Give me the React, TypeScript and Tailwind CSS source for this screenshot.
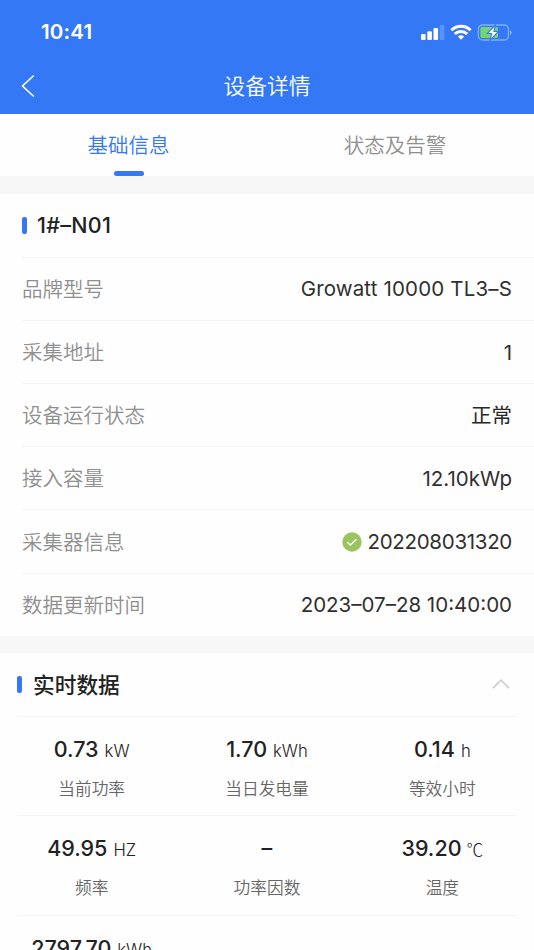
import type { ReactNode } from "react";

function StatusIcons() {
  return (
    <svg width="92" height="18" viewBox="0 0 92 18" fill="none">
      <g fill="#fff">
        <rect x="1" y="10" width="4.6" height="6" rx="1" />
        <rect x="7.3" y="7.2" width="4.6" height="8.8" rx="1" />
        <rect x="13.5" y="4" width="4.6" height="12" rx="1" />
        <rect x="19.8" y="1" width="4.6" height="15" rx="1" opacity="0.2" />
      </g>
      <g stroke="#fff" strokeWidth="3">
        <path d="M31.4 6.2a13.6 13.6 0 0 1 19.2 0" />
        <path d="M34.8 10a8.8 8.8 0 0 1 12.4 0" />
      </g>
      <path d="M37.9 12.6a4.6 4.6 0 0 1 6.2 0L41 15.8Z" fill="#fff" />
      <rect x="58.4" y="1" width="30" height="15" rx="4" stroke="#fff" strokeOpacity="0.4" strokeWidth="1.3" />
      <path d="M90 6.3c2 .9 2 3.7 0 4.7Z" fill="#fff" fillOpacity="0.5" />
      <rect x="60.4" y="3.1" width="17.6" height="10.8" rx="1.6" fill="#73d76f" />
      <path d="M75.4.8 67.2 9.5h4.4l-1.5 6.7 8.2-8.8h-4.4Z" fill="#fff" stroke="#3478f6" strokeWidth="1.1" />
    </svg>
  );
}

function Row({ label, children }: { label: string; children: ReactNode }) {
  return (
    <div className="ml-[22px] flex h-[63.2px] items-center justify-between border-t border-[#f5f5f5] pt-[2px] pr-[22px] text-[20.5px]">
      <span className="pt-px font-[350] text-[#8f8f8f]">{label}</span>
      {children}
    </div>
  );
}

function Metric({ value, unit, label }: { value: string; unit?: ReactNode; label?: string }) {
  return (
    <div className="flex flex-col items-center pt-[16px] whitespace-nowrap">
      <div className="flex h-[32px] items-baseline gap-[6px] text-[#222]">
        <span className="text-[21.5px] leading-[32px] font-medium">{value}</span>
        {unit && <span className="text-[16.7px] font-light">{unit}</span>}
      </div>
      {label && <span className="mt-[12px] text-[16.7px] leading-[25px] font-[350] text-[#666]">{label}</span>}
    </div>
  );
}

export default function App() {
  return (
    <div className="flex h-[950px] w-full flex-col overflow-hidden bg-[#f7f7f7] font-['Inter','Noto_Sans_CJK_SC',sans-serif]">
      <header className="h-[113.5px] shrink-0 bg-[#3478f6] text-white">
        <div className="flex h-[58px] items-center justify-between pt-[7px] pr-[22px] pl-[41px]">
          <span className="text-[20.5px] font-semibold tracking-[0.2px]">10:41</span>
          <StatusIcons />
        </div>
        <div className="grid h-[55px] grid-cols-[60px_1fr_60px] items-center">
          <svg className="ml-[21px]" width="14" height="24" viewBox="0 0 14 24" fill="none" stroke="#fff" strokeWidth="1.6">
            <path d="M12.8 1.5 1.5 12l11.3 10.5" />
          </svg>
          <h1 className="text-center text-[21.7px] leading-[32px] font-[350]">设备详情</h1>
        </div>
      </header>

      <nav className="grid h-[62.5px] shrink-0 grid-cols-2 bg-[#fefefe] text-[20.5px]">
        <div className="flex flex-col items-center justify-between pt-[16px] pr-[10px] text-[#3478f6]">
          <span className="leading-[31px] font-[350]">基础信息</span>
          <span className="h-[5px] w-[30px] rounded-full bg-[#3478f6]" />
        </div>
        <div className="pt-[16px] pr-[11px] text-center leading-[31px] font-[350] text-[#8f8f8f]">状态及告警</div>
      </nav>

      <section className="mt-[18px] shrink-0 bg-[#fefefe]">
        <div className="flex h-[62.7px] items-center pl-[22px]">
          <span className="h-[17px] w-[5px] rounded-[2px] bg-[#3478f6]" />
          <h2 className="ml-[10px] text-[21.5px] font-medium tracking-[0.3px] text-[#222]">1#–N01</h2>
        </div>
        <Row label="品牌型号"><span className="tracking-[0.16px] text-[#303030]">Growatt 10000 TL3–S</span></Row>
        <Row label="采集地址"><span className="text-[#303030]">1</span></Row>
        <Row label="设备运行状态"><span className="pt-px text-[#282828]">正常</span></Row>
        <Row label="接入容量"><span className="text-[#303030]">12.10kWp</span></Row>
        <Row label="采集器信息">
          <span className="flex items-center gap-[6px] tracking-[-0.3px] text-[#303030]">
            <svg className="-mt-[2px]" width="20" height="20" viewBox="0 0 20 20" fill="none">
              <circle cx="10" cy="10" r="9.7" fill="#9ac45d" />
              <path d="m5.3 10.2 3.1 2.8 6.1-5.7" stroke="#fff" strokeWidth="1.5" />
            </svg>
            202208031320
          </span>
        </Row>
        <Row label="数据更新时间"><span className="text-[#303030]">2023–07–28 10:40:00</span></Row>
      </section>

      <section className="mt-[17px] shrink-0 bg-[#fefefe] px-[17px]">
        <div className="flex h-[63px] items-center">
          <span className="h-[17px] w-[5px] rounded-[2px] bg-[#3478f6]" />
          <h2 className="ml-[11px] flex-1 pt-[2px] text-[21.7px] font-medium text-[#222]">实时数据</h2>
          <svg className="mr-[7px]" width="18" height="12" viewBox="0 0 18 12" fill="none" stroke="#cfcfcf" strokeWidth="1.8">
            <path d="m1 10.2 8-8 8 8" />
          </svg>
        </div>
        <div className="h-[99.5px] border-t border-[#f5f5f5]">
          <div className="-mx-[13px] grid grid-cols-3">
            <Metric value="0.73" unit="kW" label="当前功率" />
            <Metric value="1.70" unit="kWh" label="当日发电量" />
            <Metric value="0.14" unit="h" label="等效小时" />
          </div>
        </div>
        <div className="h-[99.5px] border-t border-[#f5f5f5]">
          <div className="-mx-[13px] grid grid-cols-3">
            <Metric value="49.95" unit="HZ" label="频率" />
            <Metric value="–" label="功率因数" />
            <Metric value="39.20" unit={<span className="-ml-px font-['Noto_Sans_CJK_SC',sans-serif] leading-[20px]">℃</span>} label="温度" />
          </div>
        </div>
        <div className="border-t border-[#f5f5f5]">
          <div className="-mx-[13px] grid grid-cols-3">
            <Metric value="2797.70" unit="kWh" />
          </div>
        </div>
      </section>
    </div>
  );
}
